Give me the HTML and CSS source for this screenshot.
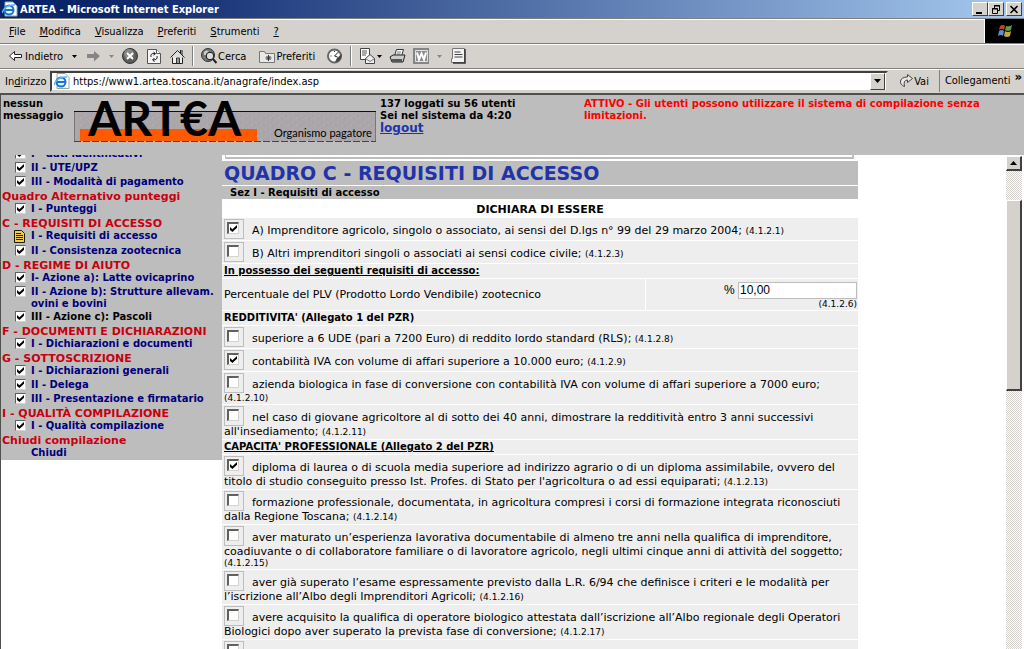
FILE: index.html
```
<!DOCTYPE html>
<html lang="it">
<head>
<meta charset="utf-8">
<title>ARTEA - Microsoft Internet Explorer</title>
<link rel="stylesheet" href="styles.css">
</head>
<body>
<div class="window">
  <header class="titlebar">
    <svg class="ico" width="16" height="16" viewBox="0 0 16 16"><path d="M3 1h8l4 4v10H3z" fill="#fff" stroke="#8aa" /><circle cx="7" cy="9" r="4.5" fill="#dff" stroke="#1d6fd0" stroke-width="2"/><path d="M3 9h8" stroke="#1d6fd0" stroke-width="2"/><path d="M0 12Q3 3 13 4" fill="none" stroke="#5bb4f0" stroke-width="1.5"/></svg>
    <h1 class="title">ARTEA - Microsoft Internet Explorer</h1>
    <div class="winbtns">
      <button class="winbtn" aria-label="Riduci a icona"><svg width="10" height="9" viewBox="0 0 10 9"><path d="M1 7h6v2H1z"/></svg></button>
      <button class="winbtn" aria-label="Ripristina"><svg width="10" height="9" viewBox="0 0 10 9"><path d="M3.500 3V.5h5v5H6.500M3 1h6M1.500 3.500h5v5h-5zM1 4h6" fill="none" stroke="#000"/></svg></button>
      <button class="winbtn winbtn-close" aria-label="Chiudi"><svg width="10" height="9" viewBox="0 0 10 9"><path d="M1.500 1l7 7M8.500 1l-7 7" stroke="#000" stroke-width="1.600"/></svg></button>
    </div>
  </header>

  <div class="menurow">
    <nav class="menubar">
      <button class="menu"><u>F</u>ile</button>
      <button class="menu"><u>M</u>odifica</button>
      <button class="menu"><u>V</u>isualizza</button>
      <button class="menu"><u>P</u>referiti</button>
      <button class="menu"><u>S</u>trumenti</button>
      <button class="menu"><u>?</u></button>
    </nav>
    <div class="throbber">
      <svg width="18" height="16" viewBox="0 0 18 16"><path d="M4 3q3-2 5 0l-1 4q-2-2-5 0z" fill="#b34a2c"/><path d="M10 3q3 1 6-1l-1 5q-3 2-6 0z" fill="#5d9a48"/><path d="M3 8q3-2 5 0l-1 5q-2-2-5 0z" fill="#5a8fd0"/><path d="M9 8q3 2 6 0l-1 5q-3 2-6 0z" fill="#c9a63c"/></svg>
    </div>
  </div>

  <div class="toolbar">
    <button class="tool tool-back"><svg width="13" height="11" viewBox="0 0 13 11"><path d="M5.500.5v3h7v3h-7v3L.5 5z" fill="#fff" stroke="#222"/></svg>Indietro</button>
    <button class="tool tool-drop" aria-label="Cronologia indietro"><svg width="5" height="3" viewBox="0 0 5 3"><path d="M0 0h5L2.500 3z"/></svg></button>
    <button class="tool tool-fwd" aria-label="Avanti"><svg width="13" height="11" viewBox="0 0 13 11"><path d="M7 0v3H0v4h7v3.500L13 5z" fill="#858585"/></svg></button>
    <button class="tool tool-drop2" aria-label="Cronologia avanti"><svg width="5" height="3" viewBox="0 0 5 3"><path d="M0 0h5L2.500 3z" fill="#858585"/></svg></button>
    <button class="tool tool-stop" aria-label="Termina"><svg width="16" height="16" viewBox="0 0 16 16"><circle cx="8" cy="8" r="7.500" fill="#5c5c5c" stroke="#333"/><circle cx="7" cy="6" r="5" fill="#888"/><path d="M5 5l6 6M11 5l-6 6" stroke="#fff" stroke-width="1.800"/></svg></button>
    <button class="tool tool-refresh" aria-label="Aggiorna"><svg width="14" height="16" viewBox="0 0 14 16"><path d="M.5 1.500h9l4 4v10H.5z" fill="#f4f4f4" stroke="#555"/><path d="M9.500 1.500v4h4" fill="#fff" stroke="#555"/><path d="M4 9q-1-4 4-3.500M6.500 4l2 1.700-2 1.500M10 8q1 4-4 4M7.500 10l-2 2 2 1.500" fill="none" stroke="#222"/></svg></button>
    <button class="tool tool-home" aria-label="Pagina iniziale"><svg width="15" height="15" viewBox="0 0 15 15"><path d="M2.500 8v6.500h10V8" fill="#eee" stroke="#222"/><path d="M10.500 1v5M12 1v5" stroke="#222"/><path d="M.5 8.500l7-7 7 7" fill="#ddd" stroke="#222"/><path d="M6.500 14V9h3v5" fill="#999" stroke="#333"/></svg></button>
    <span class="tsep"></span>
    <button class="tool tool-search"><svg width="16" height="16" viewBox="0 0 16 16"><circle cx="7" cy="7" r="6.500" fill="#777" stroke="#333"/><path d="M3 4q3-3 5 0l-2 3H3z" fill="#ccc"/><circle cx="9" cy="8" r="3.800" fill="#ddd" stroke="#111"/><path d="M12 11l3.500 4" stroke="#222" stroke-width="2"/></svg>Cerca</button>
    <button class="tool tool-fav"><svg width="16" height="13" viewBox="0 0 16 13"><path d="M.5 12.500V1.500h5l1 2h9v9z" fill="#e8e8e8" stroke="#777"/><path d="M9.500 5v6M6.500 8h6M7.500 6l4 4M11.500 6l-4 4" stroke="#333"/></svg>Preferiti</button>
    <button class="tool tool-hist" aria-label="Cronologia"><svg width="16" height="16" viewBox="0 0 16 16"><circle cx="7.500" cy="8" r="6.500" fill="#fff" stroke="#666" stroke-width="2"/><path d="M7.500 8l4-4M7.500 8l3 1" stroke="#222"/><path d="M8 14q6 0 7-8l-5 4z" fill="#444"/><path d="M3.500 8h1M7.500 3v1" stroke="#222"/></svg></button>
    <span class="tsep"></span>
    <button class="tool tool-mail" aria-label="Posta"><svg width="24" height="16" viewBox="0 0 24 16"><path d="M1.500.5h9v11h-9z" fill="#fff" stroke="#444"/><path d="M3 3h5M3 5h5M3 7h4" stroke="#555"/><path d="M6.500 15.500v-5l4.500-4 4.500 4v5z" fill="#eee" stroke="#444"/><path d="M6.500 10.500l4.500 3 4.500-3" fill="none" stroke="#777"/><path d="M18 7h5l-2.500 3z"/></svg></button>
    <button class="tool tool-print" aria-label="Stampa"><svg width="17" height="15" viewBox="0 0 17 15"><path d="M5.500 7l2-6.500h7l-2 6.500" fill="#fff" stroke="#333"/><path d="M8 3h4M7.500 5h4" stroke="#777"/><path d="M1 8l3-2h12l-2 7H3z" fill="#ccc" stroke="#222"/><path d="M2 10h11v3H4z" fill="#555"/></svg></button>
    <button class="tool tool-word" aria-label="Modifica con Word"><svg width="17" height="16" viewBox="0 0 17 16"><path d="M0 0h16v16H0z" fill="#858585"/><path d="M2.500 2.500h12v11h-12z" fill="#8d8d8d" stroke="#e2e2e2"/><path d="M4 4.500l2 7 2.500-6L11 11.500l2-7" fill="none" stroke="#fff" stroke-width="2"/></svg></button>
    <button class="tool tool-drop3" aria-label="Altri editor"><svg width="5" height="3" viewBox="0 0 5 3"><path d="M0 0h5L2.500 3z" fill="#858585"/></svg></button>
    <button class="tool tool-disc" aria-label="Discussione"><svg width="16" height="16" viewBox="0 0 16 16"><path d="M2.500.5h12v14H1.500v-4h1z" fill="#f3f3f3" stroke="#777"/><path d="M15 1v14H3" fill="none" stroke="#333" stroke-width="1.500"/><path d="M4.500 4h6M4.500 6.500h8M4.500 9h8" stroke="#444"/></svg></button>
  </div>

  <div class="addressrow">
    <label class="addrlabel" for="addr">In<u>d</u>irizzo</label>
    <div class="addrbox">
      <svg class="ico" width="16" height="16" viewBox="0 0 16 16"><path d="M3 .5h8l4 4v11H3z" fill="#fff" stroke="#8aa" /><circle cx="7" cy="9" r="4.500" fill="#dff" stroke="#1d6fd0" stroke-width="2"/><path d="M3 9h8" stroke="#1d6fd0" stroke-width="2"/><path d="M0 12Q3 3 13 4" fill="none" stroke="#5bb4f0" stroke-width="1.500"/></svg>
      <input class="addr" id="addr" type="text" value="https://www1.artea.toscana.it/anagrafe/index.asp">
      <button class="dropbtn" aria-label="Apri elenco"><svg width="7" height="4" viewBox="0 0 7 4"><path d="M0 0h7L3.500 4z"/></svg></button>
    </div>
    <button class="go"><svg width="14" height="14" viewBox="0 0 14 14"><path d="M8.500.5l5 4-5 4v-2.500Q4 6 5.500 12.500 1 11 1.500 7 2.500 3 8.500 3z" fill="#e8e8e8" stroke="#444"/></svg>Vai</button>
    <button class="links">Collegamenti <span class="chev">»</span></button>
  </div>

  <div class="page">
    <div class="topframe">
      <p class="msg">nessun messaggio</p>
      <div class="logo">
        <svg class="logoart" width="302" height="44" viewBox="0 0 302 44" role="img" aria-label="ARTEA Organismo pagatore">
          <defs><pattern id="grain" width="9" height="7" patternUnits="userSpaceOnUse"><path d="M0 0h9v7H0z" fill="#aaa6a9"/><path d="M1 1h2v1H1zM6 3h2v2H6zM3 5h1v1H3z" fill="#b0acae"/><path d="M4 2h2v1H4zM0 4h2v1H0z" fill="#a5a1a5"/></pattern></defs>
          <path d="M0 11h302v30H0z" fill="url(#grain)"/>
          <path d="M6 29h177v12H6z" fill="#ff5a00"/>
          <path d="M0 11.500h302" stroke="#300"/>
          <path d="M.5 12v29M301.500 12v29" stroke="#777"/>
          <path d="M0 41.500h302" stroke="#444" stroke-dasharray="7 2"/>
          <text x="14" y="36" class="logotext">ART€A</text>
          <text x="200" y="37" class="logosub">Organismo pagatore</text>
        </svg>
      </div>
      <div class="session">137 loggati su 56 utenti<br>Sei nel sistema da 4:20<br><a href="#" class="logout">logout</a></div>
      <p class="notice">ATTIVO - Gli utenti possono utilizzare il sistema di compilazione senza limitazioni.</p>
    </div>

    <div class="frames">
      <aside class="side">
        <nav class="tree">
          <label class="item"><input class="chk" type="checkbox" checked><a href="#">I - dati identificativi</a></label>
          <label class="item"><input class="chk" type="checkbox" checked><a href="#">II - UTE/UPZ</a></label>
          <label class="item"><input class="chk" type="checkbox" checked><a href="#">III - Modalità di pagamento</a></label>
          <h2 class="head">Quadro Alternativo punteggi</h2>
          <label class="item"><input class="chk" type="checkbox" checked><a href="#">I - Punteggi</a></label>
          <h2 class="head">C - REQUISITI DI ACCESSO</h2>
          <div class="item"><svg class="doc" width="11" height="13" viewBox="0 0 11 13"><path d="M.5.5h7l3 3v9H.5z" fill="#f2cf4a" stroke="#221a00"/><path d="M2 3.500h5M2 5.500h7M2 7.500h7M2 9.500h7" stroke="#221a00"/></svg><a href="#">I - Requisiti di accesso</a></div>
          <label class="item"><input class="chk" type="checkbox" checked><a href="#">II - Consistenza zootecnica</a></label>
          <h2 class="head">D - REGIME DI AIUTO</h2>
          <label class="item"><input class="chk" type="checkbox" checked><a href="#">I- Azione a): Latte ovicaprino</a></label>
          <label class="item item-two"><input class="chk" type="checkbox" checked><a href="#">II - Azione b): Strutture allevam.<br>ovini e bovini</a></label>
          <label class="item"><input class="chk" type="checkbox" checked><a href="#" class="visited">III - Azione c): Pascoli</a></label>
          <h2 class="head">F - DOCUMENTI E DICHIARAZIONI</h2>
          <label class="item"><input class="chk" type="checkbox" checked><a href="#">I - Dichiarazioni e documenti</a></label>
          <h2 class="head">G - SOTTOSCRIZIONE</h2>
          <label class="item"><input class="chk" type="checkbox" checked><a href="#">I - Dichiarazioni generali</a></label>
          <label class="item"><input class="chk" type="checkbox" checked><a href="#">II - Delega</a></label>
          <label class="item"><input class="chk" type="checkbox" checked><a href="#">III - Presentazione e firmatario</a></label>
          <h2 class="head">I - QUALITÀ COMPILAZIONE</h2>
          <label class="item"><input class="chk" type="checkbox" checked><a href="#">I - Qualità compilazione</a></label>
          <h2 class="head">Chiudi compilazione</h2>
          <div class="item item-plain"><a href="#">Chiudi</a></div>
        </nav>
      </aside>

      <main class="main">
        <form class="form">
          <div class="prev"></div>
          <h2 class="quadro">QUADRO C - REQUISITI DI ACCESSO</h2>
          <h3 class="sez">Sez I - Requisiti di accesso</h3>
          <p class="declare">DICHIARA DI ESSERE</p>
          <label class="row"><span class="box"><input class="chk" type="checkbox" checked></span><span class="t">A) Imprenditore agricolo, singolo o associato, ai sensi del D.lgs n° 99 del 29 marzo 2004; </span>(4.1.2.1)</label>
          <label class="row"><span class="box"><input class="chk" type="checkbox"></span><span class="t">B) Altri imprenditori singoli o associati ai sensi codice civile; </span>(4.1.2.3)</label>
          <h4 class="sub"><u>In possesso dei seguenti requisiti di accesso:</u></h4>
          <div class="pct">
            <label class="pctlabel" for="plv">Percentuale del PLV (Prodotto Lordo Vendibile) zootecnico</label>
            <div class="pctval"><div class="pctline">% <input class="num" id="plv" type="text" value="10,00"></div>(4.1.2.6)</div>
          </div>
          <h4 class="sub">REDDITIVITA' (Allegato 1 del PZR)</h4>
          <label class="row"><span class="box"><input class="chk" type="checkbox"></span><span class="t">superiore a 6 UDE (pari a 7200 Euro) di reddito lordo standard (RLS); </span>(4.1.2.8)</label>
          <label class="row"><span class="box"><input class="chk" type="checkbox" checked></span><span class="t">contabilità IVA con volume di affari superiore a 10.000 euro; </span>(4.1.2.9)</label>
          <label class="row"><span class="box"><input class="chk" type="checkbox"></span><span class="t">azienda biologica in fase di conversione con contabilità IVA con volume di affari superiore a 7000 euro;</span><br>(4.1.2.10)</label>
          <label class="row"><span class="box"><input class="chk" type="checkbox"></span><span class="t">nel caso di giovane agricoltore al di sotto dei 40 anni, dimostrare la redditività entro 3 anni successivi<br>all'insediamento; </span>(4.1.2.11)</label>
          <h4 class="sub"><u>CAPACITA' PROFESSIONALE (Allegato 2 del PZR)</u></h4>
          <label class="row"><span class="box"><input class="chk" type="checkbox" checked></span><span class="t">diploma di laurea o di scuola media superiore ad indirizzo agrario o di un diploma assimilabile, ovvero del<br>titolo di studio conseguito presso Ist. Profes. di Stato per l'agricoltura o ad essi equiparati; </span>(4.1.2.13)</label>
          <label class="row"><span class="box"><input class="chk" type="checkbox"></span><span class="t">formazione professionale, documentata, in agricoltura compresi i corsi di formazione integrata riconosciuti<br>dalla Regione Toscana; </span>(4.1.2.14)</label>
          <label class="row"><span class="box"><input class="chk" type="checkbox"></span><span class="t">aver maturato un’esperienza lavorativa documentabile di almeno tre anni nella qualifica di imprenditore,<br>coadiuvante o di collaboratore familiare o di lavoratore agricolo, negli ultimi cinque anni di attività del soggetto;</span><br>(4.1.2.15)</label>
          <label class="row"><span class="box"><input class="chk" type="checkbox"></span><span class="t">aver già superato l’esame espressamente previsto dalla L.R. 6/94 che definisce i criteri e le modalità per<br>l’iscrizione all’Albo degli Imprenditori Agricoli; </span>(4.1.2.16)</label>
          <label class="row"><span class="box"><input class="chk" type="checkbox"></span><span class="t">avere acquisito la qualifica di operatore biologico attestata dall’iscrizione all’Albo regionale degli Operatori<br>Biologici dopo aver superato la prevista fase di conversione; </span>(4.1.2.17)</label>
          <label class="row"><span class="box"><input class="chk" type="checkbox"></span></label>
        </form>
      </main>

      <div class="scroll">
        <button class="scrollup" aria-label="Scorri in alto"><svg width="7" height="4" viewBox="0 0 7 4"><path d="M0 4h7L3.500 0z"/></svg></button>
        <div class="track"><div class="thumb"></div></div>
      </div>
    </div>
  </div>
</div>
</body>
</html>
```
FILE: styles.css
```
* { box-sizing: border-box; }

body {
  margin: 0;
  font-family: "DejaVu Sans", Verdana, sans-serif;
  font-size: 10px;
  color: #000;
  background: #d5d2cd;
}

button {
  margin: 0;
  padding: 0;
  border: 0;
  background: none;
  font: inherit;
  color: inherit;
}

h1, h2, h3, h4, p { margin: 0; font-size: inherit; }

.window {
  height: 100vh;
  display: flex;
  flex-direction: column;
  overflow: hidden;
}

/* Window chrome */
.titlebar, .menurow, .toolbar, .addressrow {
  flex: none;
  display: flex;
  align-items: center;
  font-family: "DejaVu Sans Condensed", "DejaVu Sans", Tahoma, sans-serif;
  font-size: 11px;
  white-space: nowrap;
}

.titlebar {
  height: 18px;
  padding: 0 2px;
  gap: 2px;
  background: linear-gradient(90deg, #0a246a, #0a246a 10%, #a6caf0);
  color: #fff;
}
.title { flex: 1; font-size: 11px; font-weight: bold; }
.winbtns { display: flex; }
.winbtn, .dropbtn, .scrollup, .thumb {
  display: flex;
  align-items: center;
  justify-content: center;
  background: #d5d2cd;
  border: 1px solid;
  border-color: #fff #404040 #404040 #fff;
}
.winbtn { width: 16px; height: 14px; }
.winbtn-close { margin-left: 2px; }

.menurow {
  height: 26px;
  border-top: 1px solid #808080;
  border-bottom: 1px solid #808080;
  box-shadow: inset 0 1px #fff;
  align-items: stretch;
}
.menubar { flex: 1; display: flex; padding-left: 9px; gap: 14px; }
.throbber {
  width: 40px;
  display: flex;
  align-items: center;
  justify-content: center;
  background: #000;
  border-left: 1px solid #fff;
}

.toolbar {
  height: 24px;
  padding-left: 9px;
  box-shadow: inset 0 1px #fff;
}
.tool { display: flex; align-items: center; gap: 3px; }
.tool-drop { margin-left: 9px; }
.tool-fwd { margin-left: 10px; }
.tool-drop2 { margin-left: 9px; }
.tool-stop { margin-left: 8px; }
.tool-refresh { margin-left: 9px; }
.tool-home { margin-left: 9px; }
.tsep {
  width: 2px;
  height: 20px;
  margin: 0 7px;
  border-left: 1px solid #808080;
  border-right: 1px solid #fff;
}
.tool-search { gap: 1px; }
.tool-fav { margin-left: 13px; gap: 1px; }
.tool-hist { margin-left: 12px; }
.tool-print { margin-left: 6px; }
.tool-word { margin-left: 7px; }
.tool-drop3 { margin-left: 7px; }
.tool-disc { margin-left: 8px; }

.addressrow {
  height: 25px;
  padding-left: 5px;
  border-top: 1px solid #808080;
  box-shadow: inset 0 1px #fff;
}
.addrlabel { width: 45px; }
.addrbox {
  flex: 1;
  height: 21px;
  display: flex;
  align-items: center;
  gap: 3px;
  padding: 0 1px 0 2px;
  background: #fff;
  border: 2px solid;
  border-color: #404040 #d5d2cd #d5d2cd #404040;
}
.addr {
  flex: 1;
  min-width: 0;
  padding: 0;
  border: 0;
  outline: 0;
  font: inherit;
}
.dropbtn { width: 15px; height: 17px; }
.go {
  display: flex;
  align-items: center;
  gap: 1px;
  height: 22px;
  padding: 0 10px 0 11px;
  border-right: 1px solid #808080;
}
.links { display: flex; padding: 0 2px 0 5px; gap: 4px; height: 22px; line-height: 22px; }
.chev { font-size: 13px; font-weight: bold; line-height: 14px; }

/* Page frames */
.page {
  flex: 1;
  min-height: 0;
  display: flex;
  flex-direction: column;
  border-top: 2px solid #505050;
  border-left: 1px solid #505050;
  background: #bdbdbd;
}
.topframe {
  flex: none;
  height: 60px;
  display: flex;
  align-items: flex-start;
  padding: 3px 2px 0;
  font-weight: bold;
  font-size: 10px;
  line-height: 12px;
}
.msg { width: 71px; }
.logo { width: 306px; height: 44px; padding-top: 2px; }
.logoart { display: block; overflow: visible; }
.logotext { font-family: Lato, sans-serif; font-size: 48px; font-weight: 700; }
.logosub { font-family: Lato, sans-serif; font-size: 11px; font-weight: 400; }
.session { width: 204px; white-space: nowrap; }
.logout { font-size: 12px; color: #2233aa; }
.notice { flex: 1; max-width: 420px; color: #f00; }

.frames {
  flex: 1;
  min-height: 0;
  display: flex;
  background: #fff;
}
.side { flex: none; width: 221px; overflow: hidden; }
.tree {
  margin-top: -8px;
  padding: 0 1px;
  background: #bdbdbd;
  font-weight: bold;
  white-space: nowrap;
}
.head {
  padding-top: 2px;
  font-size: 11px;
  line-height: 11px;
  color: #c8000f;
}
.item {
  display: flex;
  gap: 5px;
  padding: 1px 0 1px 13px;
  line-height: 12px;
}
.item-two { padding-bottom: 0; }
.item-plain { padding-left: 29px; }
.item a { color: #00007b; text-decoration: none; }
.item .visited { color: #000; }
.doc { margin-left: -1px; margin-right: 1px; }

.chk {
  appearance: none;
  flex: none;
  display: block;
  width: 12px;
  height: 12px;
  margin: 0;
  background: #fff;
  border: 1px solid;
  border-width: 2px 1px 1px 2px;
  border-color: #606060 #d5d2cd #d5d2cd #606060;
}
.item .chk { width: 11px; height: 11px; border-width: 1px; }
.chk:checked::before {
  content: "";
  display: block;
  width: 7px;
  height: 7px;
  margin: 1px;
  background: #000;
  clip-path: polygon(0 30%, 35% 62%, 100% 0, 100% 38%, 35% 100%, 0 70%);
}

.main { flex: 1; min-width: 0; overflow: hidden; }
.form {
  width: 636px;
  max-width: 100%;
  display: flex;
  flex-direction: column;
  gap: 1px;
}
.prev {
  height: 4px;
  margin: 0 4px 1px 3px;
  border: 1px solid #bdbdbd;
  border-width: 0 2px 2px 1px;
}
.quadro {
  padding: 0 2px;
  background: #bdbdbd;
  color: #2233aa;
  font-size: 19px;
  line-height: 24px;
}
.sez {
  padding: 0 8px;
  background: #bdbdbd;
  line-height: 13px;
}
.declare {
  font-weight: bold;
  font-size: 11px;
  line-height: 12px;
  padding: 4px 0 1px;
  text-align: center;
}
.row, .sub, .pct > * { background: #eee; }
.row {
  display: block;
  padding: 1px 2px;
  font-size: 9px;
  line-height: 10px;
  white-space: nowrap;
}
.t { font-size: 11px; line-height: 12px; }
.box {
  display: inline-block;
  width: 20px;
  height: 20px;
  margin-right: 8px;
  padding: 2px;
  border: 1px solid #bdbdbd;
  vertical-align: -5px;
}
.sub { padding: 1px 2px; line-height: 12px; }
.pct { display: flex; gap: 1px; font-size: 9px; line-height: 10px; }
.pctlabel { flex: 2; padding: 10px 2px 0; font-size: 11px; line-height: 12px; }
.pctval { flex: 1; padding: 2px 1px 1px; text-align: right; }
.pctline { font-family: "Liberation Sans", Arial, sans-serif; font-size: 12px; line-height: 18px; }
.num {
  width: 119px;
  height: 17px;
  padding: 0 1px;
  border: 1px solid #bdbdbd;
  font: inherit;
  line-height: 15px;
}

.scroll {
  flex: none;
  width: 18px;
  padding: 1px 2px 0 0;
  display: flex;
  flex-direction: column;
}
.scrollup { height: 15px; border-width: 1px 2px 2px 1px; }
.track {
  flex: 1;
  padding-top: 29px;
  background: repeating-conic-gradient(#d5d2cd 0 25%, #fff 0 50%) 0 0 / 2px 2px;
}
.thumb { height: 191px; border-width: 1px 2px 2px 1px; }
```
